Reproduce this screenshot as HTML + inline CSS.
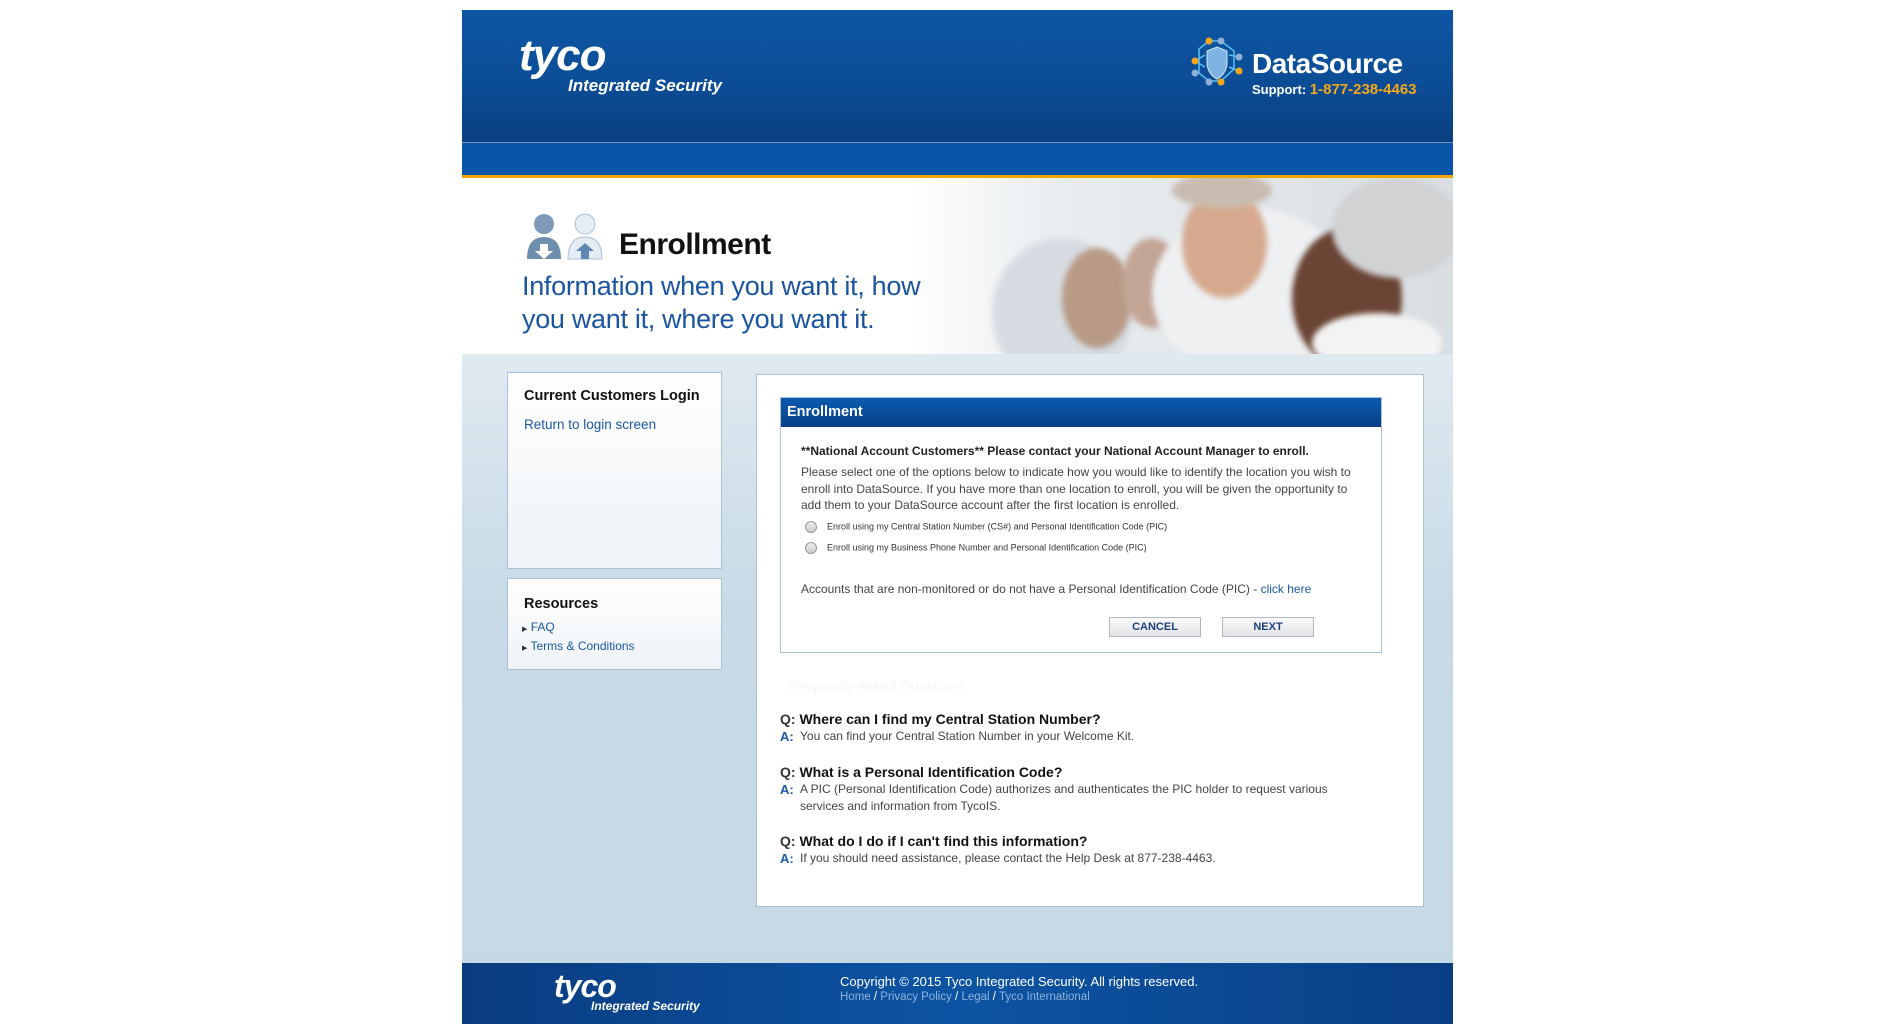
<!DOCTYPE html>
<html><head><meta charset="utf-8"><style>
*{margin:0;padding:0;box-sizing:border-box}
body{width:1903px;height:1033px;background:#fff;font-family:"Liberation Sans",Arial,sans-serif;position:relative;overflow:hidden}
.abs{position:absolute}
#page{left:462px;top:10px;width:991px;height:1014px;background:linear-gradient(#dfe9f0 355px,#c7dae6 600px,#c5d9e5)}
#hdr{left:0;top:0;width:991px;height:132px;background:linear-gradient(#0d56a4,#0b4c94 60%,#0a3f80)}
#nav{left:0;top:132px;width:991px;height:33px;background:#0a55a7;border-top:1px solid #6f95c4}
#orange{left:0;top:165px;width:991px;height:3px;background:#f2a500}
#hero{left:0;top:168px;width:991px;height:176px;background:linear-gradient(90deg,#fff 0%,#fff 45%,#e9edf0 60%,#d9dee2 100%);overflow:hidden}
.blob{position:absolute;border-radius:50%;filter:blur(3px)}
.box{position:absolute;background:linear-gradient(#fff,#eef3f7);border:1px solid #a9c2da}
.lnk{color:#1b59a2}
#footer{left:0;top:953px;width:991px;height:61px;background:linear-gradient(90deg,#0a3c80,#0c54a3 50%,#0a3f85)}
.q{position:absolute;left:780px;font-size:14px;font-weight:bold;color:#111}
.a{position:absolute;left:800px;font-size:12px;color:#444;line-height:17px}
.a b{position:absolute;left:-20px;top:0;color:#1b59a2;font-size:13px}
.btn{position:absolute;top:617px;height:20px;width:92px;border:1px solid #aeb6bf;background:linear-gradient(#fafafa,#e2e4e7);color:#1d3f7a;font-size:11px;font-weight:bold;text-align:center;line-height:18px}
.radio{display:inline-block;width:12px;height:12px;border-radius:50%;border:1px solid #999;background:linear-gradient(#eee,#ccc);vertical-align:middle;margin-right:10px}
</style></head><body>
<div id="page" class="abs">
 <div id="hdr" class="abs">
  <div class="abs" style="left:57px;top:26px;color:#fff;font-style:italic;font-weight:bold;font-size:44px;letter-spacing:-1px;line-height:40px">tyco</div>
  <div class="abs" style="left:106px;top:66px;color:#fff;font-style:italic;font-weight:bold;font-size:17px">Integrated Security</div>
  <svg class="abs" style="left:729px;top:27px" width="52" height="50" viewBox="0 0 52 50">
   <g stroke="#5cc0f0" stroke-width="1.5" fill="none"><path d="M8 12L18 4L30 4L43 14L43 32L30 44L18 44L8 36Z"/><path d="M4 24L14 18M48 20L38 18M4 24L14 30M48 34L38 30"/></g>
   <path d="M16 14L26 10L36 14L36 28Q34 38 26 42Q18 38 16 28Z" fill="#7fb4e2" stroke="#cfe6fa"/>
   <g fill="#f6a81a"><circle cx="18" cy="4" r="3.5"/><circle cx="4" cy="24" r="3.5"/><circle cx="48" cy="34" r="3.5"/><circle cx="30" cy="45" r="3.5"/></g>
   <g fill="#8fb0d8"><circle cx="30" cy="4" r="3.5"/><circle cx="48" cy="20" r="3.5"/><circle cx="4" cy="36" r="3.5"/><circle cx="18" cy="45" r="3.5"/></g>
  </svg>
  <div class="abs" style="left:790px;top:38px;color:#fff;font-weight:bold;font-size:28px;letter-spacing:-0.5px">DataSource</div>
  <div class="abs" style="left:790px;top:71px;color:#fff;font-weight:bold;font-size:13px">Support: <span style="color:#f6a81a;font-size:15px">1-877-238-4463</span></div>
 </div>
 <div id="nav" class="abs"></div>
 <div id="orange" class="abs"></div>
 <div id="hero" class="abs">
  <div class="blob" style="left:530px;top:60px;width:140px;height:150px;background:#d6dce1"></div>
  <div class="blob" style="left:600px;top:70px;width:70px;height:100px;background:#b89a86"></div>
  <div class="blob" style="left:660px;top:60px;width:60px;height:90px;background:#c3a595"></div>
  <div class="blob" style="left:690px;top:30px;width:200px;height:170px;background:#eef0f2"></div>
  <div class="blob" style="left:720px;top:10px;width:85px;height:110px;background:#d6a98f"></div>
  <div class="blob" style="left:710px;top:-5px;width:100px;height:35px;background:#c8bcb0"></div>
  <div class="blob" style="left:830px;top:50px;width:110px;height:140px;background:#6a4434"></div>
  <div class="blob" style="left:870px;top:0;width:130px;height:100px;background:#d0d2d4"></div>
  <div class="blob" style="left:850px;top:135px;width:130px;height:60px;background:#f3f3f3"></div>
  <div class="abs" style="left:63px;top:32px">
   <svg width="85" height="52" viewBox="0 0 85 50"><circle cx="19" cy="13" r="10" fill="#7d9bb8"/><path d="M2 48Q2 26 19 26Q36 26 36 48Z" fill="#6f8faf"/><path d="M15 33h8v7h5l-9 8-9-8h5z" fill="#fff"/><circle cx="60" cy="13" r="10" fill="#e4ecf4" stroke="#a9bfd6"/><path d="M43 48Q43 26 60 26Q77 26 77 48Z" fill="#e4ecf4" stroke="#a9bfd6"/><path d="M56 48v-8h-5l9-8 9 8h-5v8z" fill="#5f88b5"/></svg>
  </div>
  <div class="abs" style="left:157px;top:50px;font-size:30px;font-weight:bold;color:#111;letter-spacing:-0.5px">Enrollment</div>
  <div class="abs" style="left:60px;top:92px;font-size:27px;color:#1a55a0;line-height:33px;letter-spacing:-0.3px">Information when you want it, how<br>you want it, where you want it.</div>
 </div>
 <div id="footer" class="abs">
  <div class="abs" style="left:92px;top:8px;color:#fff;font-style:italic;font-weight:bold;font-size:32px;letter-spacing:-1px;line-height:30px">tyco</div>
  <div class="abs" style="left:129px;top:36px;color:#fff;font-style:italic;font-weight:bold;font-size:12px">Integrated Security</div>
  <div class="abs" style="left:378px;top:11px;color:#fff;font-size:13px">Copyright © 2015 Tyco Integrated Security. All rights reserved.</div>
  <div class="abs" style="left:378px;top:28px;color:#8fb3dd;font-size:11.5px">Home <span style="color:#fff">/</span> Privacy Policy <span style="color:#fff">/</span> Legal <span style="color:#fff">/</span> Tyco International</div>
 </div>
</div>

<div class="box" style="left:507px;top:372px;width:215px;height:197px">
 <div class="abs" style="left:16px;top:15px;font-size:14.5px;font-weight:bold;color:#111">Current Customers Login</div>
 <div class="abs lnk" style="left:16px;top:44px;font-size:13.5px">Return to login screen</div>
</div>
<div class="box" style="left:507px;top:578px;width:215px;height:92px">
 <div class="abs" style="left:16px;top:17px;font-size:14.5px;font-weight:bold;color:#111">Resources</div>
 <div class="abs lnk" style="left:14px;top:40px;font-size:12px;line-height:17px"><span style="font-size:7px;color:#333">▶</span> FAQ<br><span style="font-size:7px;color:#333">▶</span> Terms &amp; Conditions</div>
</div>

<div class="abs" style="left:756px;top:374px;width:668px;height:533px;background:#fff;border:1px solid #a9c2da"></div>
<div class="abs" style="left:780px;top:397px;width:602px;height:256px;border:1px solid #a9c2da;background:#fff">
 <div style="height:29px;background:linear-gradient(#0c5bb0,#073f86);color:#fff;font-size:14.5px;font-weight:bold;padding:6px 0 0 6px">Enrollment</div>
 <div class="abs" style="left:20px;top:46px;font-size:12px;font-weight:bold;color:#222">**National Account Customers** Please contact your National Account Manager to enroll.</div>
 <div class="abs" style="left:20px;top:66px;width:558px;font-size:12px;color:#444;line-height:16.5px">Please select one of the options below to indicate how you would like to identify the location you wish to enroll into DataSource. If you have more than one location to enroll, you will be given the opportunity to add them to your DataSource account after the first location is enrolled.</div>
 <div class="abs" style="left:24px;top:123px;font-size:9px;color:#333"><span class="radio"></span>Enroll using my Central Station Number (CS#) and Personal Identification Code (PIC)</div>
 <div class="abs" style="left:24px;top:144px;font-size:9px;color:#333"><span class="radio"></span>Enroll using my Business Phone Number and Personal Identification Code (PIC)</div>
 <div class="abs" style="left:20px;top:184px;font-size:12px;color:#444">Accounts that are non-monitored or do not have a Personal Identification Code (PIC) - <span class="lnk">click here</span></div>
</div>
<div class="btn" style="left:1109px">CANCEL</div>
<div class="btn" style="left:1222px">NEXT</div>
<div class="abs" style="left:788px;top:678px;font-size:14px;color:#f4f6f8">Frequently Asked Questions</div>
<div class="q" style="top:711px"><span style="color:#333">Q:</span> Where can I find my Central Station Number?</div>
<div class="a" style="top:728px"><b>A:</b>You can find your Central Station Number in your Welcome Kit.</div>
<div class="q" style="top:764px"><span style="color:#333">Q:</span> What is a Personal Identification Code?</div>
<div class="a" style="top:781px;width:545px"><b>A:</b>A PIC (Personal Identification Code) authorizes and authenticates the PIC holder to request various services and information from TycoIS.</div>
<div class="q" style="top:833px"><span style="color:#333">Q:</span> What do I do if I can't find this information?</div>
<div class="a" style="top:850px"><b>A:</b>If you should need assistance, please contact the Help Desk at 877-238-4463.</div>
</body></html>
